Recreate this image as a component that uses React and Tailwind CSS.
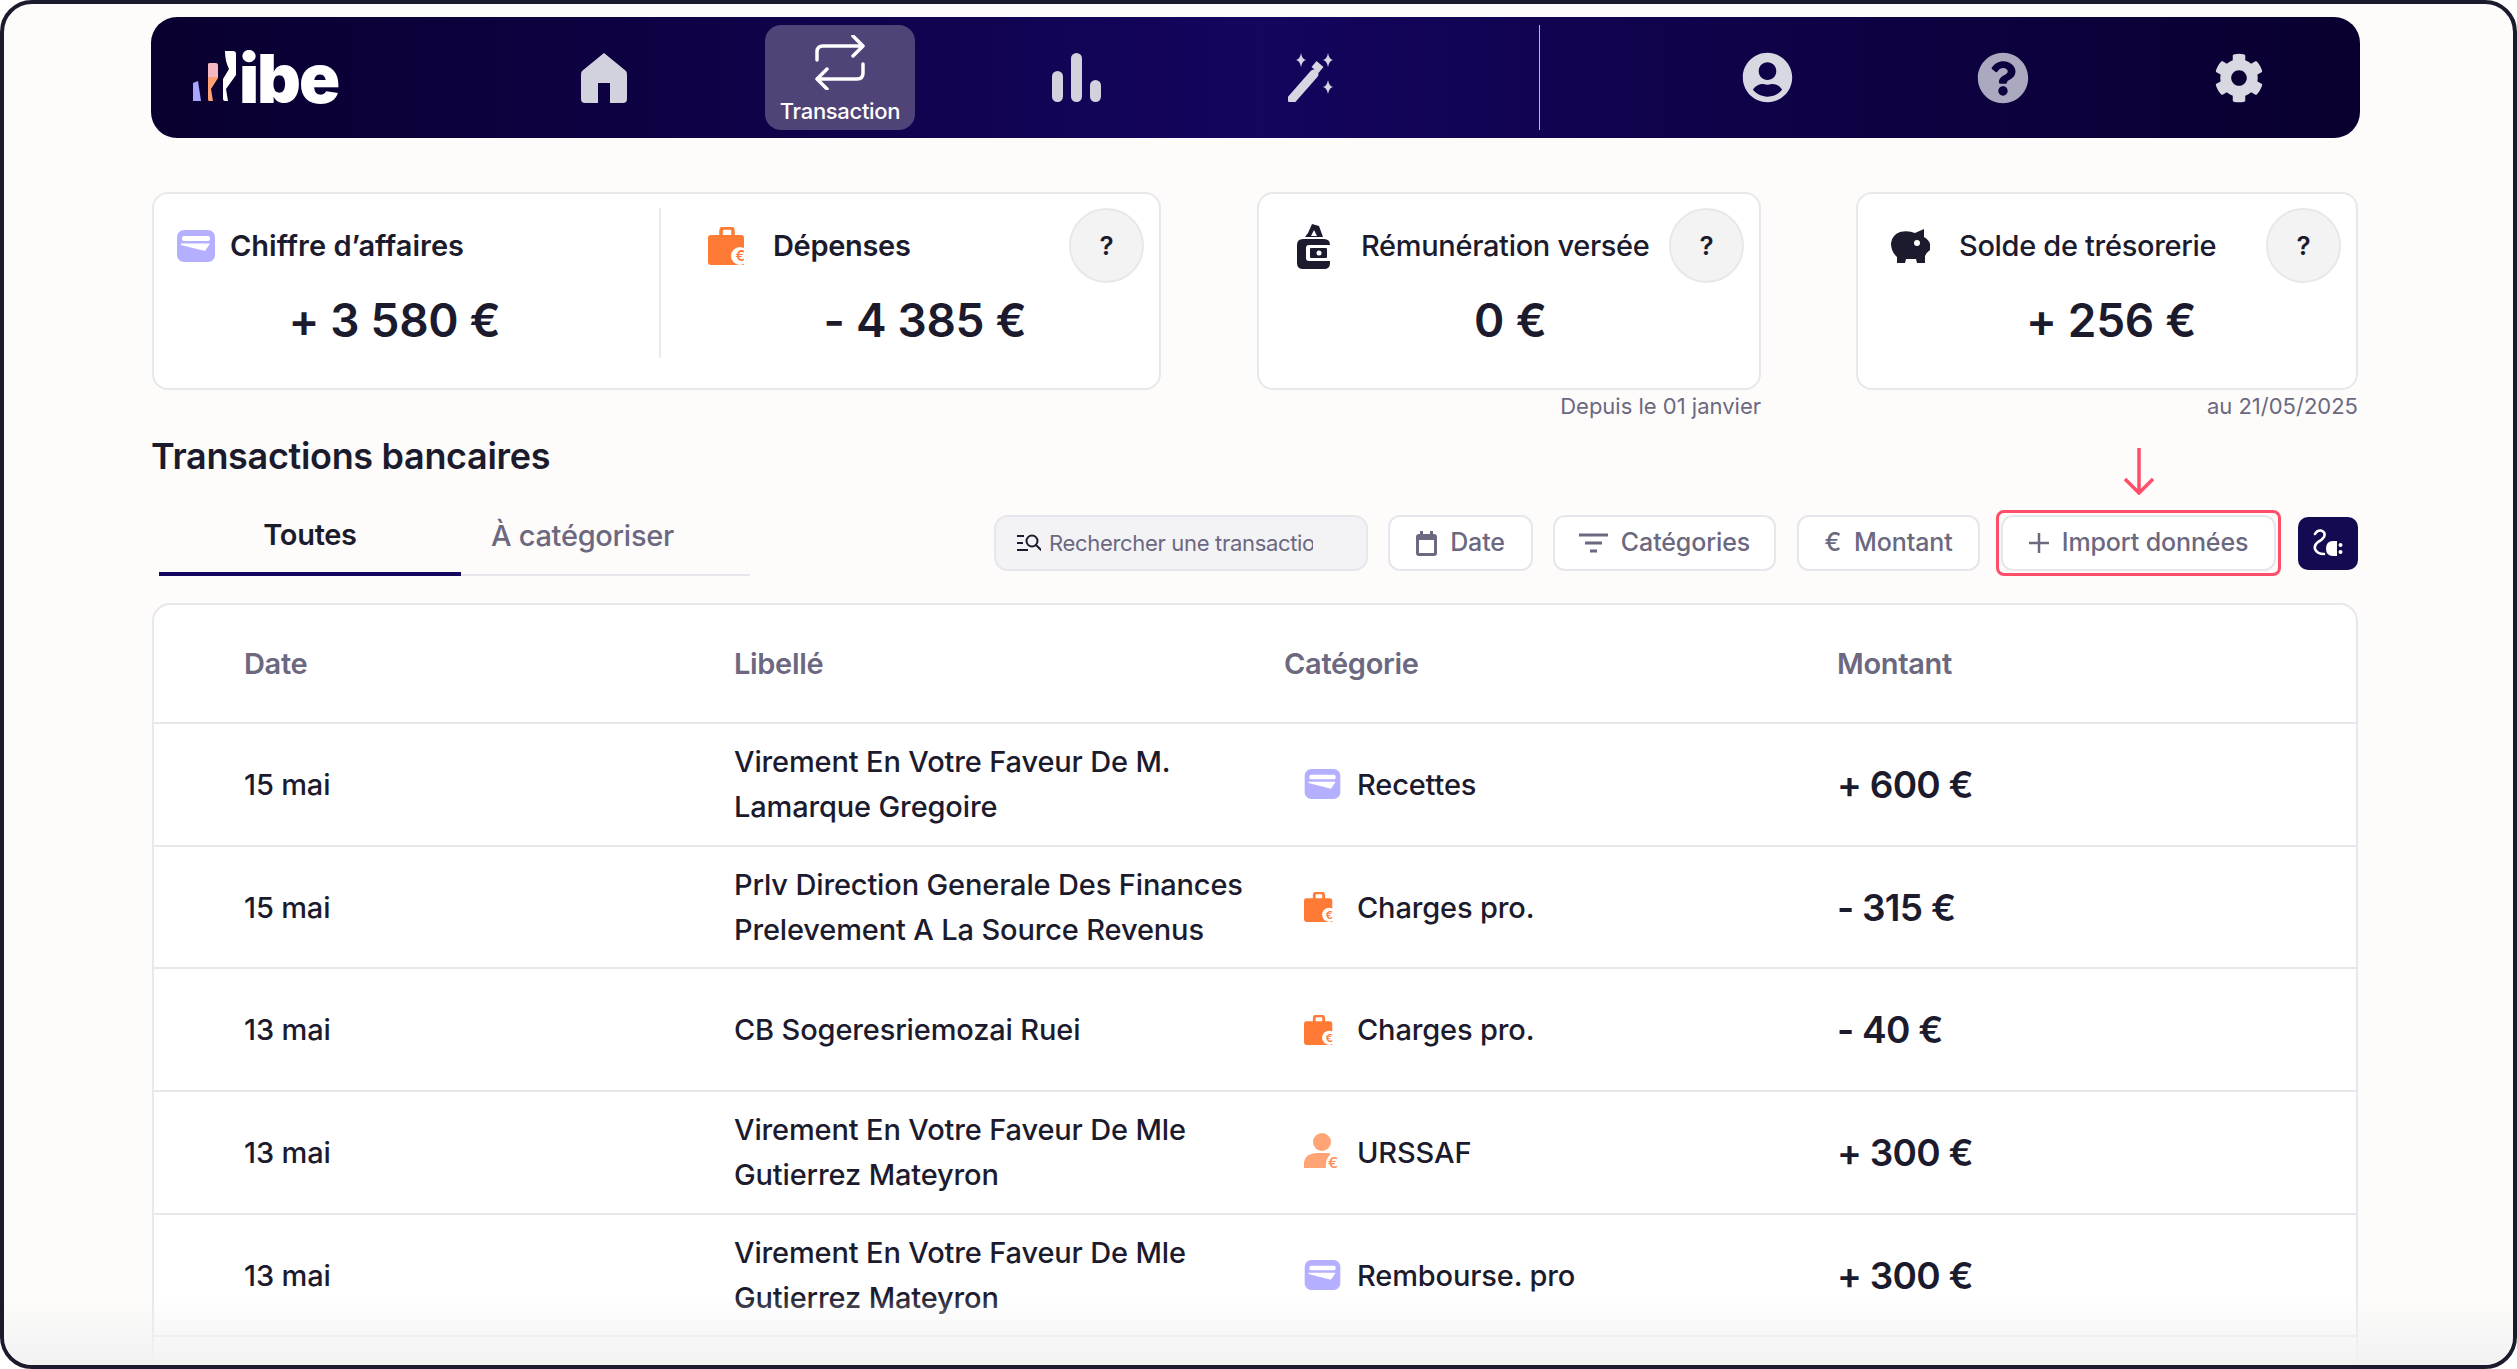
import React from "react";
import { FaCog, FaUserCircle, FaQuestionCircle } from "react-icons/fa";

const Wallet = ({ w = 38, h = 32 }) => (
  <svg width={w} height={h} viewBox="0 0 38 32" className="shrink-0">
    <rect width="38" height="32" rx="7" fill="#b4b0ff" />
    <rect x="5" y="6" width="28" height="5" rx="2" fill="#fff" />
    <path d="M4 13.5H33L28 21L4 15Z" fill="#fff" />
  </svg>
);

const Bag = ({ w = 42, h = 38 }) => (
  <svg width={w} height={h} viewBox="0 0 42 38" className="shrink-0">
    <path d="M13 9V4Q13 1 16 1H22Q25 1 25 4V9" fill="none" stroke="#ff7a35" strokeWidth="3.5" />
    <path d="M3 8H33Q36 8 36 11V38H3Q0 38 0 35V11Q0 8 3 8Z" fill="#ff7a35" />
    <circle cx="32" cy="29" r="9" fill="#fff" />
    <text x="32" y="34" textAnchor="middle" fontSize="14" fontWeight="600" fill="#ff7a35" fontFamily="Inter, sans-serif">€</text>
  </svg>
);

const Person = () => (
  <svg width="37" height="38" viewBox="0 0 37 38" className="shrink-0">
    <circle cx="18" cy="9" r="9" fill="#ffa474" />
    <path d="M0 35V29Q1 21 12 20H24Q27 20 26 22Q21 26 22 35Z" fill="#ffa474" />
    <text x="29" y="35" textAnchor="middle" fontSize="15" fontWeight="500" fill="#ff8a55" fontFamily="Inter, sans-serif">€</text>
  </svg>
);

const MoneyBag = () => (
  <svg width="33" height="46" viewBox="0 0 33 46" className="shrink-0">
    <path d="M11 10L15 1L22 3L26 14H8Z" fill="#1c1b2e" />
    <path d="M14 13L17 7L20 13Z" fill="#fff" />
    <path d="M6 16H27Q33 16 33 22V40Q33 46 27 46H6Q0 46 0 40V22Q0 16 6 16Z" fill="#1c1b2e" />
    <path d="M12 22H33V38H12Q9 38 9 35V25Q9 22 12 22Z" fill="#fff" />
    <rect x="13" y="25" width="17" height="10" rx="1" fill="#1c1b2e" />
    <circle cx="22" cy="30" r="2.5" fill="#fff" />
  </svg>
);

const Piggy = () => (
  <svg width="40" height="34" viewBox="0 0 40 34" className="shrink-0">
    <path d="M9 3Q17 1 24 4L33 0L33 8Q38 11 39 15V21Q36 23 34 27V34H26L25 30H15L14 34H6V28Q0 23 0 14Q1 6 9 3Z" fill="#1c1b2e" />
    <circle cx="26" cy="14" r="3" fill="#fff" />
  </svg>
);

const Help = () => (
  <div className="w-[75px] h-[75px] shrink-0 rounded-full bg-[#f3f3f3] border-2 border-[#e8e8ec] flex items-center justify-center text-[26px] font-semibold text-[#1c1b2e]">?</div>
);

const NavCell = ({ children }) => (
  <div className="w-[236px] h-full flex items-center justify-center">{children}</div>
);

const Sparkle = ({ x, y }) => (
  <path transform={`translate(${x} ${y})`} d="M0 -7Q1 -1 5 0Q1 1 0 7Q-1 1 -5 0Q-1 -1 0 -7Z" fill="#d6d6e2" />
);

const rows = [
  ["15 mai", ["Virement En Votre Faveur De M.", "Lamarque Gregoire"], "wallet", "Recettes", "+ 600 €"],
  ["15 mai", ["Prlv Direction Generale Des Finances", "Prelevement A La Source Revenus"], "bag", "Charges pro.", "- 315 €"],
  ["13 mai", ["CB Sogeresriemozai Ruei"], "bag", "Charges pro.", "- 40 €"],
  ["13 mai", ["Virement En Votre Faveur De Mle", "Gutierrez Mateyron"], "person", "URSSAF", "+ 300 €"],
  ["13 mai", ["Virement En Votre Faveur De Mle", "Gutierrez Mateyron"], "wallet", "Rembourse. pro", "+ 300 €"],
];

const CatIcon = ({ type }) => {
  if (type === "wallet") return <Wallet w={37} h={30} />;
  if (type === "bag") return <Bag w={33} h={30} />;
  return <Person />;
};

const ToolButton = ({ width, children }) => (
  <div className={`h-[56px] rounded-[12px] bg-white border-2 border-[#e6e6ec] flex items-center justify-center gap-[13px] text-[25px] font-medium text-[#6b6880] tracking-[-0.005em] ${width}`}>
    {children}
  </div>
);

export default function App() {
  return (
    <div
      className="relative h-[1369px] overflow-hidden rounded-[32px] border-4 border-[#1c1b2e] bg-[#fdfcfa] text-[#1c1b2e] pl-[147px] pr-[153px] pt-[13px] tracking-[-0.02em]"
      style={{ fontFamily: "Inter, 'Noto Sans', sans-serif" }}
    >
      <nav className="h-[121px] w-[2209px] rounded-[26px] bg-gradient-to-r from-[#09002f] via-[#14055e] to-[#09002f] flex items-center">
        <div className="w-[335px] pl-[42px] flex items-end h-[50px] -mt-[3px]">
          <svg width="48" height="50" viewBox="0 0 48 50" className="shrink-0">
            <path d="M0 50V32L5 30L8 50Z" fill="#a9a6ff" />
            <path d="M15 14Q15 12 17 12H22Q25 12 25 15V27L18 38L20 50H16Q15 50 15 48Z" fill="#ffa075" />
            <path d="M15 14Q15 12 17 12H22Q25 12 25 15V26H15Z" fill="#f5b8c0" />
            <path d="M32 0H40Q43 0 43 3V24L33 38L35 50H32Q30 50 30 48V28L36 18Q32 10 32 0Z" fill="#fff" />
          </svg>
          <span className="text-[68px] leading-[68px] font-black text-white tracking-[-0.03em] -ml-[2px] -mb-[11px]">ibe</span>
        </div>
        <NavCell>
          <svg width="46" height="50" viewBox="0 0 46 50">
            <path d="M23 0L45 18Q46 19 46 22V46Q46 50 42 50H29V30H17V50H4Q0 50 0 46V22Q0 19 1 18Z" fill="#d2d2de" />
          </svg>
        </NavCell>
        <NavCell>
          <div className="w-[150px] h-[105px] rounded-[16px] bg-[#4f4377] flex flex-col items-center pt-[10px]">
            <svg width="52" height="55" viewBox="0 0 52 55" fill="none" stroke="#fff" strokeWidth="3.5" strokeLinecap="round" strokeLinejoin="round">
              <path d="M3 25V17Q3 11 9 11H49M39 1L49 11L39 21" />
              <path d="M49 29V38Q49 44 43 44H3M13 34L3 44L13 54" />
            </svg>
            <span className="text-[22px] leading-[30px] font-medium text-white mt-[6px]">Transaction</span>
          </div>
        </NavCell>
        <NavCell>
          <svg width="49" height="49" viewBox="0 0 49 49" fill="#d2d2de">
            <rect x="0" y="18" width="11" height="31" rx="5.5" />
            <rect x="19" y="0" width="11" height="49" rx="5.5" />
            <rect x="38" y="27" width="11" height="22" rx="5.5" />
          </svg>
        </NavCell>
        <NavCell>
          <svg width="48" height="49" viewBox="0 0 48 49">
            <path d="M4 46L26 21" stroke="#d6d6e2" strokeWidth="9" strokeLinecap="round" />
            <path d="M27 17L32 11" stroke="#d6d6e2" strokeWidth="9" />
            <Sparkle x={13} y={7} />
            <Sparkle x={40} y={7} />
            <Sparkle x={40} y={34} />
          </svg>
        </NavCell>
        <div className="w-[109px]" />
        <div className="w-px h-[105px] bg-[#b9b6d0]" />
        <div className="w-[109px]" />
        <NavCell><FaUserCircle size={51} color="#d8d8e2" /></NavCell>
        <NavCell><FaQuestionCircle size={52} color="#aba9c0" /></NavCell>
        <NavCell><FaCog size={50} color="#d8d8e2" /></NavCell>
      </nav>

      <section className="flex mt-[54px] pl-px">
        <div className="w-[1009px] h-[198px] rounded-[16px] bg-white border-2 border-[#e8e8ec] flex pt-[14px] pb-[30px]">
          <div className="w-[507px] border-r-2 border-[#ebebee] shrink-0">
            <div className="h-[75px] flex items-center pl-[23px] gap-[15px] text-[29px] font-semibold tracking-normal">
              <Wallet />
              <span>Chiffre d’affaires</span>
            </div>
            <p className="mt-[9px] text-center text-[46px] leading-[56px] font-semibold pr-[24px]">+ 3 580 €</p>
          </div>
          <div className="grow">
            <div className="h-[75px] flex items-center pl-[47px] pr-[15px] gap-[23px] text-[29px] font-semibold">
              <Bag />
              <span className="grow">Dépenses</span>
              <Help />
            </div>
            <p className="mt-[9px] text-center text-[46px] leading-[56px] font-semibold pl-[30px]">- 4 385 €</p>
          </div>
        </div>
        <div className="w-[504px] ml-[96px]">
          <div className="h-[198px] rounded-[16px] bg-white border-2 border-[#e8e8ec] pt-[14px]">
            <div className="h-[75px] flex items-center pl-[38px] pr-[15px] text-[29px] font-medium">
              <MoneyBag />
              <span className="grow ml-[31px] whitespace-nowrap">Rémunération versée</span>
              <Help />
            </div>
            <p className="mt-[9px] text-center text-[46px] leading-[56px] font-semibold pl-[3px] tracking-normal">0 €</p>
          </div>
          <p className="text-right text-[22px] leading-[28px] mt-[2px] text-[#6b6880] tracking-normal">Depuis le 01 janvier</p>
        </div>
        <div className="w-[502px] ml-[95px]">
          <div className="h-[198px] rounded-[16px] bg-white border-2 border-[#e8e8ec] pt-[14px]">
            <div className="h-[75px] flex items-center pl-[33px] pr-[15px] text-[29px] font-medium">
              <Piggy />
              <span className="grow ml-[28px] whitespace-nowrap">Solde de trésorerie</span>
              <Help />
            </div>
            <p className="mt-[9px] text-center text-[46px] leading-[56px] font-semibold pl-[8px]">+ 256 €</p>
          </div>
          <p className="text-right text-[22px] leading-[28px] mt-[2px] text-[#6b6880] tracking-normal">au 21/05/2025</p>
        </div>
      </section>

      <h1 className="mt-[13px] text-[36px] leading-[46px] font-semibold">Transactions bancaires</h1>

      <div className="mt-[26px] flex items-start justify-between w-[2207px]">
        <div className="flex ml-[8px] h-[71px]">
          <div className="w-[302px] h-[71px] border-b-4 border-[#14055e] flex items-center justify-center text-[29px] font-semibold pb-[8px]">Toutes</div>
          <div className="w-[289px] h-[71px] border-b-2 border-[#e6e6ec] flex items-center pl-[30px] text-[29px] font-medium text-[#6b6880] pb-[8px] tracking-[-0.01em]">À catégoriser</div>
        </div>
        <div className="relative flex items-center h-[56px] mt-[10px]">
          <div className="w-[374px] h-[56px] rounded-[14px] bg-[#f3f3f6] border-2 border-[#e6e6ec] flex items-center pl-[21px] gap-[8px] text-[22px] text-[#6b6880]">
            <svg width="24" height="20" viewBox="0 0 24 20" fill="none" stroke="#1c1b2e" strokeWidth="2" className="shrink-0">
              <path d="M0 3H7M0 10H6M0 17H11" />
              <circle cx="15" cy="8" r="5.5" />
              <path d="M19 12L24 17" strokeLinecap="round" />
            </svg>
            <span className="w-[264px] overflow-hidden whitespace-nowrap">Rechercher une transaction</span>
          </div>
          <div className="ml-[20px]">
            <ToolButton width="w-[145px]">
              <svg width="21" height="25" viewBox="0 0 21 25" className="shrink-0">
                <path d="M4 0H7V3H14V0H17V3H18Q21 3 21 6V22Q21 25 18 25H3Q0 25 0 22V6Q0 3 3 3H4Z" fill="#6b6880" />
                <rect x="3" y="9" width="15" height="13" fill="#fff" />
              </svg>
              Date
            </ToolButton>
          </div>
          <div className="ml-[20px]">
            <ToolButton width="w-[223px]">
              <svg width="29" height="20" viewBox="0 0 29 20" fill="none" stroke="#6b6880" strokeWidth="3" className="shrink-0">
                <path d="M0 2H29M6 10H23M11 18H18" />
              </svg>
              Catégories
            </ToolButton>
          </div>
          <div className="ml-[21px]">
            <ToolButton width="w-[183px]">
              <span>€</span>
              Montant
            </ToolButton>
          </div>
          <div className="relative ml-[21px]">
            <ToolButton width="w-[275px]">
              <svg width="20" height="20" viewBox="0 0 20 20" stroke="#6b6880" strokeWidth="2.5" className="shrink-0">
                <path d="M10 0V20M0 10H20" />
              </svg>
              Import données
            </ToolButton>
            <div className="absolute -inset-x-[5px] -inset-y-[5px] rounded-[8px] border-[3px] border-[#ff4d6a]" />
            <svg width="30" height="47" viewBox="0 0 30 47" fill="none" stroke="#ff4d6a" strokeWidth="3.5" className="absolute left-[123px] -top-[67px]">
              <path d="M15 0V44M1 31L15 45L29 31" />
            </svg>
          </div>
          <div className="ml-[22px] w-[60px] h-[53px] rounded-[10px] bg-[#130a52] flex items-center justify-center">
            <svg width="30" height="28" viewBox="0 0 30 28" fill="none">
              <path d="M2 5Q4 1 8 1.5Q13 3 11 8Q9 11 5 13Q1 16 2 20Q4 25 11 25" stroke="#fff" strokeWidth="2.6" strokeLinecap="round" />
              <path d="M24 12V27H20Q13 27 13 19.5Q13 12 20 12Z" fill="#fff" />
              <circle cx="27.5" cy="16" r="2" fill="#fff" />
              <circle cx="27.5" cy="23" r="2" fill="#fff" />
            </svg>
          </div>
        </div>
      </div>

      <div className="mt-[27px] w-[2206px] ml-px rounded-t-[18px] bg-white border-2 border-[#e8e8ec]">
        <div className="h-[119px] grid grid-cols-[580px_550px_553px_1fr] items-center border-b-2 border-[#e8e8ec] text-[29px] font-semibold text-[#6b6880]">
          <div className="pl-[90px]">Date</div>
          <div>Libellé</div>
          <div>Catégorie</div>
          <div>Montant</div>
        </div>
        {rows.map((r, i) => (
          <div key={i} className="h-[122.7px] grid grid-cols-[580px_550px_553px_1fr] items-center border-b-2 border-[#e8e8ec] text-[29px] leading-[45px] font-medium tracking-[-0.005em]">
            <div className="pl-[90px]">{r[0]}</div>
            <div className="whitespace-nowrap">
              {r[1].map((l) => (
                <div key={l}>{l}</div>
              ))}
            </div>
            <div className="flex items-center pl-[20px]">
              <span className="w-[53px] flex"><CatIcon type={r[2]} /></span>
              {r[3]}
            </div>
            <div className="text-[37px] font-semibold tracking-[-0.02em]">{r[4]}</div>
          </div>
        ))}
        <div className="h-[60px]" />
      </div>

      <div className="absolute inset-x-0 bottom-0 h-[70px] bg-gradient-to-b from-transparent to-[#f2f2f3]" />
    </div>
  );
}
